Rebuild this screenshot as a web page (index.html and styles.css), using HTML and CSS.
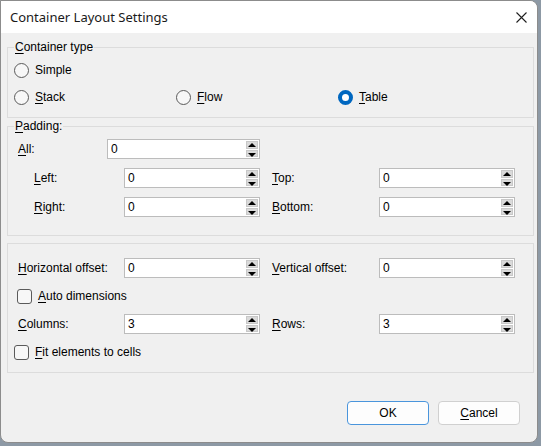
FILE: index.html
```html
<!DOCTYPE html>
<html lang="en">

<head>
    <meta charset="UTF-8">
    <title>Container Layout Settings</title>
    <link rel="stylesheet" href="styles.css">
</head>

<body>
    <div class="dialog">
        <div class="titlebar">
            <span class="title">Container Layout Settings</span>
            <span class="close">
                <svg width="11" height="11" viewBox="0 0 11 11">
                    <path d="M0.5 0.5 L10.5 10.5 M10.5 0.5 L0.5 10.5" stroke="#1f1f1f" stroke-width="1.1" fill="none"/>
                </svg>
            </span>
        </div>

        <div class="content">
            <!-- container type -->
            <fieldset class="group group-type">
                <legend><u>C</u>ontainer type</legend>
                <div class="inner">
                    <div class="row">
                        <label class="radio"><span class="dot"></span><span>Simple</span></label>
                    </div>
                    <div class="row cols3">
                        <label class="radio"><span class="dot"></span><span><u>S</u>tack</span></label>
                        <label class="radio"><span class="dot"></span><span><u>F</u>low</span></label>
                        <label class="radio"><span class="dot checked"></span><span><u>T</u>able</span></label>
                    </div>
                </div>
            </fieldset>

            <!-- padding -->
            <fieldset class="group group-padding">
                <legend><u>P</u>adding:</legend>
                <div class="inner">
                    <div class="row">
                        <span class="lbl lbl-all"><u>A</u>ll:</span>
                        <div class="spin spin-all"><input type="text" value="0"><span class="arrows"><span class="up"></span><span class="down"></span></span></div>
                    </div>
                    <div class="row indent">
                        <span class="lbl lbl-side"><u>L</u>eft:</span>
                        <div class="spin"><input type="text" value="0"><span class="arrows"><span class="up"></span><span class="down"></span></span></div>
                        <span class="lbl lbl-right"><u>T</u>op:</span>
                        <div class="spin"><input type="text" value="0"><span class="arrows"><span class="up"></span><span class="down"></span></span></div>
                    </div>
                    <div class="row indent">
                        <span class="lbl lbl-side"><u>R</u>ight:</span>
                        <div class="spin"><input type="text" value="0"><span class="arrows"><span class="up"></span><span class="down"></span></span></div>
                        <span class="lbl lbl-right"><u>B</u>ottom:</span>
                        <div class="spin"><input type="text" value="0"><span class="arrows"><span class="up"></span><span class="down"></span></span></div>
                    </div>
                </div>
            </fieldset>

            <!-- offsets / grid -->
            <fieldset class="group group-grid">
                <div class="inner">
                    <div class="row">
                        <span class="lbl lbl-wide"><u>H</u>orizontal offset:</span>
                        <div class="spin"><input type="text" value="0"><span class="arrows"><span class="up"></span><span class="down"></span></span></div>
                        <span class="lbl lbl-right"><u>V</u>ertical offset:</span>
                        <div class="spin"><input type="text" value="0"><span class="arrows"><span class="up"></span><span class="down"></span></span></div>
                    </div>
                    <div class="row">
                        <label class="check check-auto"><span class="box"></span><span><u>A</u>uto dimensions</span></label>
                    </div>
                    <div class="row">
                        <span class="lbl lbl-wide"><u>C</u>olumns:</span>
                        <div class="spin"><input type="text" value="3"><span class="arrows"><span class="up"></span><span class="down"></span></span></div>
                        <span class="lbl lbl-right"><u>R</u>ows:</span>
                        <div class="spin"><input type="text" value="3"><span class="arrows"><span class="up"></span><span class="down"></span></span></div>
                    </div>
                    <div class="row">
                        <label class="check check-fit"><span class="box"></span><span><u>F</u>it elements to cells</span></label>
                    </div>
                </div>
            </fieldset>

            <div class="buttons">
                <button class="btn btn-default">OK</button>
                <button class="btn"><u>C</u>ancel</button>
            </div>
        </div>
    </div>
</body>

</html>
```

FILE: styles.css
```css
* {
    box-sizing: border-box;
}

body {
    margin: 0;
    background-color: #8d99a5;
    font-family: "Liberation Sans", Arial, sans-serif;
    font-size: 12px;
    color: #000;
}

u {
    text-decoration-thickness: 1px;
    text-underline-offset: 2px;
}

.dialog {
    width: 538px;
    height: 443px;
    background-color: #f0f0f0;
    border: 1px solid #8c8c8c;
    border-radius: 0 8px 8px 8px;
    overflow: hidden;
}

.titlebar {
    height: 32px;
    background-color: #fff;
    display: flex;
    align-items: center;
    justify-content: space-between;
    padding: 0 10px 0 9px;
}

.title {
    font-family: "Noto Sans", sans-serif;
    font-size: 13px;
    color: #1a1a1a;
}

.close {
    display: flex;
}

.content {
    padding: 0 3px 0 6px;
}

/* group boxes */
.group {
    margin: 0;
    padding: 0;
    border: 1px solid #dcdcdc;
    min-inline-size: 0;
}

.group legend {
    margin-left: 6px;
    padding: 0 1px;
    line-height: 14px;
}

.group-type {
    margin-top: 7px;
}

.group-type .inner {
    padding: 7px 0 11px 6px;
}

.group-type .row {
    height: 18px;
}

.group-type .row + .row {
    margin-top: 9px;
}

.group-padding {
    margin-top: 1px;
}

.group-padding .inner {
    padding: 6px 0 18px 10px;
}

.group-padding .row + .row {
    margin-top: 9px;
}

.group-grid {
    margin-top: 7px;
}

.group-grid .inner {
    padding: 14px 0 10px 10px;
}

.group-grid .row + .row {
    margin-top: 8px;
}

.row {
    display: flex;
    align-items: center;
    height: 20px;
}

.cols3 .radio {
    width: 162px;
}

/* labels */
.lbl {
    flex: none;
}

.lbl-all {
    width: 89px;
}

.indent {
    padding-left: 16px;
}

.lbl-side {
    width: 90px;
}

.lbl-wide {
    width: 106px;
}

.lbl-right {
    width: 107px;
    margin-left: 12px;
}

/* spin boxes */
.spin {
    width: 136px;
    height: 20px;
    display: flex;
    background-color: #fff;
    border: 1px solid #bcbcbc;
}

.spin-all {
    width: 153px;
}

.spin input {
    flex: 1;
    min-width: 0;
    border: none;
    padding: 0 0 0 3px;
    font-family: "Liberation Sans", Arial, sans-serif;
    font-size: 12px;
    color: #000;
    background: none;
}

.spin input:focus {
    outline: none;
}

.arrows {
    width: 12px;
    margin: 1px 1px 1px 0;
    display: flex;
    flex-direction: column;
    gap: 1px;
}

.arrows span {
    flex: 1;
    background-color: #dadada;
    border: 1px solid #c8c8c8;
    position: relative;
}

.arrows span::after {
    content: "";
    position: absolute;
    left: 1px;
    border-left: 4px solid transparent;
    border-right: 4px solid transparent;
}

.arrows .up::after {
    top: 1px;
    border-bottom: 4px solid #000;
}

.arrows .down::after {
    top: 2px;
    border-top: 4px solid #000;
}

/* radio buttons */
.radio,
.check {
    display: flex;
    align-items: center;
    gap: 6px;
}

.dot {
    width: 15px;
    height: 15px;
    border-radius: 50%;
    border: 1px solid #5a5a5a;
    background-color: #f7f7f7;
}

.dot.checked {
    border: 4.5px solid #0067c0;
    background-color: #fff;
}

/* checkboxes */
.box {
    width: 15px;
    height: 15px;
    border-radius: 3px;
    border: 1px solid #5a5a5a;
    background-color: #f7f7f7;
}

.check-auto {
    margin-left: -1px;
}

.check-fit {
    margin-left: -4px;
}

/* dialog buttons */
.buttons {
    display: flex;
    justify-content: flex-end;
    gap: 9px;
    margin-top: 28px;
    padding-right: 14px;
}

.btn {
    width: 82px;
    height: 24px;
    background-color: #fdfdfd;
    border: 1px solid #d0d0d0;
    border-radius: 4px;
    font-family: "Liberation Sans", Arial, sans-serif;
    font-size: 12px;
    color: #000;
    padding: 0;
}

.btn-default {
    border-color: #4a95dc;
}
```
